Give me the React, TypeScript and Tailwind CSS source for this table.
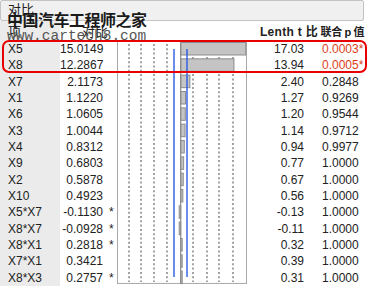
import React from 'react';

// 对比估计数据
const rows = [
  { term: 'X5', contrast: '15.0149', star: false, t: 17.03, p: '0.0003*', sig: true },
  { term: 'X8', contrast: '12.2867', star: false, t: 13.94, p: '0.0005*', sig: true },
  { term: 'X7', contrast: '2.1173', star: false, t: 2.4, p: '0.2848', sig: false },
  { term: 'X1', contrast: '1.1220', star: false, t: 1.27, p: '0.9269', sig: false },
  { term: 'X6', contrast: '1.0605', star: false, t: 1.2, p: '0.9544', sig: false },
  { term: 'X3', contrast: '1.0044', star: false, t: 1.14, p: '0.9712', sig: false },
  { term: 'X4', contrast: '0.8312', star: false, t: 0.94, p: '0.9977', sig: false },
  { term: 'X9', contrast: '0.6803', star: false, t: 0.77, p: '1.0000', sig: false },
  { term: 'X2', contrast: '0.5878', star: false, t: 0.67, p: '1.0000', sig: false },
  { term: 'X10', contrast: '0.4923', star: false, t: 0.56, p: '1.0000', sig: false },
  { term: 'X5*X7', contrast: '-0.1130', star: true, t: -0.13, p: '1.0000', sig: false },
  { term: 'X8*X7', contrast: '-0.0928', star: true, t: -0.11, p: '1.0000', sig: false },
  { term: 'X8*X1', contrast: '0.2818', star: true, t: 0.32, p: '1.0000', sig: false },
  { term: 'X7*X1', contrast: '0.3421', star: false, t: 0.39, p: '1.0000', sig: false },
  { term: 'X8*X3', contrast: '0.2757', star: true, t: 0.31, p: '1.0000', sig: false },
];

const ROW = 16.33;

function Chart() {
  const h = rows.length * ROW;
  const cx = 63.7;
  const dots = [12, 24, 37, 50, 76, 90, 102, 116];
  return (
    <svg width={130} height={h} className="shrink-0 block">
      <rect x={0.5} y={0.5} width={129} height={h - 3} fill="#fff" stroke="#a8a8a8" />
      {dots.map((x) => (
        <line key={x} x1={x} y1={3} x2={x} y2={h - 4} stroke="#8c8c8c" strokeWidth={1.6} strokeDasharray="2 2.3" />
      ))}
      {rows.map((r, i) => {
        const w = Math.max(Math.abs(r.t) * 3.82, 1.5);
        const x = r.t >= 0 ? cx : cx - w;
        return (
          <rect key={r.term} x={x} y={i * ROW + 1.5} width={w} height={12.5} fill="#c4c4c4" stroke="#8c8c8c" strokeWidth={1} />
        );
      })}
      <line x1={cx} y1={1} x2={cx} y2={h - 3} stroke="#8c8c8c" strokeWidth={1.2} />
      <line x1={57} y1={8} x2={57} y2={236} stroke="#2a5ce6" strokeWidth={1.4} />
      <line x1={70} y1={8} x2={70} y2={236} stroke="#2a5ce6" strokeWidth={1.4} />
    </svg>
  );
}

export default function App() {
  return (
    <div
      className="relative w-[370px] h-[288px] bg-white overflow-hidden text-[12px] text-[#222]"
      style={{ fontFamily: '"Liberation Sans", "Noto Sans CJK SC", sans-serif' }}
    >
      <div className="h-[21px] w-[364px] bg-[#f0f0f0] border border-[#c4c4c4] rounded-[2px] pl-[7px] text-[13px] leading-[17px]">
        对比
      </div>
      <div className="flex h-[20px] items-end text-[13px] leading-[18px]">
        <div className="w-[60px] h-full bg-[#ebebeb] pl-[8px] flex items-end">项</div>
        <div className="w-[57px] pl-[22px]">对比</div>
        <div className="w-[130px]" />
        <div className="w-[71px] flex justify-end font-bold text-[12px] tracking-[0.3px] whitespace-nowrap">Lenth t 比</div>
        <div className="w-[46px] flex justify-end font-bold text-[11px] tracking-[-0.4px] whitespace-nowrap">联合 p 值</div>
      </div>
      <div className="flex">
        <div className="w-[60px] bg-[#ebebeb]">
          {rows.map((r) => (
            <div key={r.term} className="h-[16.33px] leading-[16px] pl-[8px]">{r.term}</div>
          ))}
        </div>
        <div className="w-[57px]">
          {rows.map((r) => (
            <div key={r.term} className="h-[16.33px] leading-[16px] flex">
              <span className="w-[43px] text-right">{r.contrast}</span>
              {r.star && <span className="ml-[6px]">*</span>}
            </div>
          ))}
        </div>
        <Chart />
        <div className="w-[57px]">
          {rows.map((r) => (
            <div key={r.term} className="h-[16.33px] leading-[16px] text-right">{r.t.toFixed(2)}</div>
          ))}
        </div>
        <div className="pl-[18px]">
          {rows.map((r) => (
            <div key={r.term} className={`h-[16.33px] leading-[16px] ${r.sig ? 'text-[#e0401a]' : ''}`}>{r.p}</div>
          ))}
        </div>
      </div>

      {/* 水印 */}
      <div
        className="absolute left-[7px] top-[9px] text-[16px] font-bold tracking-[-0.5px] text-[#1a1a1a] leading-[20px]"
        style={{ fontFamily: '"Noto Sans CJK SC", sans-serif' }}
      >
        中国汽车工程师之家
      </div>
      <div
        className="absolute left-[7px] top-[27px] text-[14.5px] text-[#555] leading-[18px]"
        style={{ fontFamily: '"Liberation Mono", monospace' }}
      >
        www.cartech8.com
      </div>

      {/* 红框标注 */}
      <div className="absolute left-[2px] top-[40px] w-[365px] h-[33px] border-2 border-[#e80000] rounded-[7px]" />
    </div>
  );
}
